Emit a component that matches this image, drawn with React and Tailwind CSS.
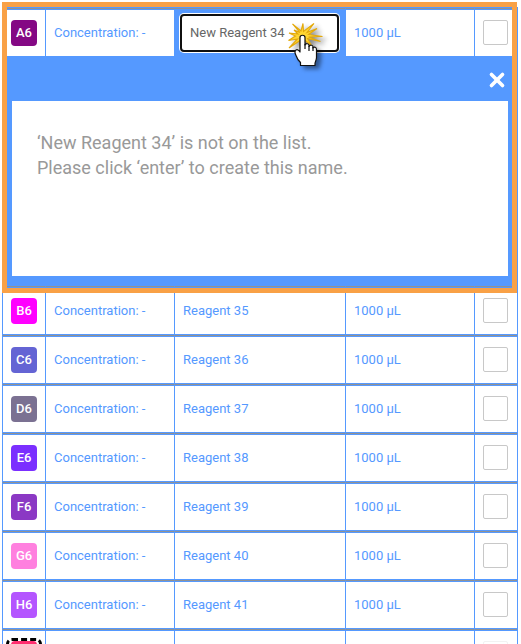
import { X } from "lucide-react"

const wells = [
  { id: "B6", reagent: "Reagent 35", color: "bg-[#ff00ff]" },
  { id: "C6", reagent: "Reagent 36", color: "bg-[#6464d4]" },
  { id: "D6", reagent: "Reagent 37", color: "bg-[#7b7192]" },
  { id: "E6", reagent: "Reagent 38", color: "bg-[#7b2fff]" },
  { id: "F6", reagent: "Reagent 39", color: "bg-[#8b38c4]" },
  { id: "G6", reagent: "Reagent 40", color: "bg-[#ff80df]" },
  { id: "H6", reagent: "Reagent 41", color: "bg-[#b455ff]" },
]

const cell =
  "h-[49px] border-t border-l border-t-[#929292] border-l-[#5599ff] p-0 pl-2 text-left font-normal shadow-[inset_0_1px_#5599ff,inset_0_-1px_#5599ff]"

function Badge({ id, color }) {
  return (
    <span
      className={`flex h-[26px] w-[26px] items-center justify-center rounded text-[13px] font-medium text-white ${color}`}
    >
      {id}
    </span>
  )
}

function Check({ label, faded }) {
  return (
    <input
      type="checkbox"
      aria-label={label}
      className={`mb-px block h-[25px] w-[25px] appearance-none rounded-xs border bg-white checked:bg-[#5599ff] ${
        faded ? "border-[#f2f2f2]" : "border-[#c8c8c8]"
      }`}
    />
  )
}

function ClickPointer() {
  return (
    <svg
      aria-hidden="true"
      viewBox="0 0 44 52"
      className="pointer-events-none absolute top-[11px] right-[13px] h-[52px] w-11 drop-shadow-[4px_3px_2px_rgba(0,0,0,0.45)]"
    >
      {/* Spark */}
      <path
        d="M12 12.500 4.500 4l8.500 7 2-7.500.5 8L26 3.500l-7 9 10-4-8.500 6 14 2-14 .5 12 4.500-13-3 4 7-7-5.500-4 10-.5-9.500-11 7.500 8.500-9-9 1.500 7-4.500L1 13l9 1-4-4z"
        fill="#ffd633"
        stroke="#e3a90c"
        strokeWidth="1.1"
        strokeLinejoin="miter"
      />
      {/* Hand */}
      <path
        d="M12 17.500c0-3 5-3 5 0v7.500c1-2 4-1.500 4 .5v1c1-2 4-1.500 4 .5v1c1-1.500 3.500-1 3.500 1.500v8c0 3-1.500 4-1.500 6v2H12.500v-3c-2-2-3.500-4-4.500-7-1-2-1.500-4.500 0-5.500 1.500-.8 3 .5 4 2z"
        fill="#fff"
        stroke="#111"
        strokeWidth="1.2"
        strokeLinejoin="round"
      />
      <path d="M17 24v5M21 26v5M25 27v4" stroke="#111" strokeWidth="1.2" />
    </svg>
  )
}

export default function App() {
  return (
    <main className="relative h-screen overflow-hidden bg-white pt-[7px] pr-[3px] pl-0.5 font-['Roboto',sans-serif] text-[13px] text-[#5599ff]">
      <table className="w-full table-fixed border-separate border-spacing-0 border-t border-r border-[#5599ff]">
        <colgroup>
          <col className="w-[43px]" />
          <col className="w-[129px]" />
          <col />
          <col className="w-[129px]" />
          <col className="w-[43px]" />
        </colgroup>
        <tbody>
          {/* Row being edited */}
          <tr>
            <th scope="row" className={cell}>
              <Badge id="A6" color="bg-[#840884]" />
            </th>
            <td className={cell}>Concentration: -</td>
            <td className="relative border-t border-t-[#929292] bg-[#5599ff] p-0 px-1.5">
              <input
                type="text"
                aria-label="Reagent name"
                defaultValue="New Reagent 34"
                className="block h-[38px] w-full rounded border-2 border-[#101010] bg-white pb-0.5 pl-2 text-[#666666] ring-1 ring-white outline-none"
              />
              <ClickPointer />
            </td>
            <td className={cell}>1000 µL</td>
            <td className={cell}>
              <Check label="Select A6" />
            </td>
          </tr>
          <tr>
            <td colSpan={5} className="bg-[#5599ff] p-0 pr-[9px] pb-2.5 pl-2.5">
              <div className="flex h-11 items-center justify-end pt-0.5">
                <button type="button" aria-label="Close" className="text-white">
                  <X size={22} strokeWidth={4} />
                </button>
              </div>
              <div className="min-h-[175px] bg-white px-[25px] pt-[29px] text-lg leading-[25px] text-[#999999]">
                <p>‘New Reagent 34’ is not on the list.</p>
                <p>Please click ‘enter’ to create this name.</p>
              </div>
            </td>
          </tr>

          {wells.map((well) => (
            <tr key={well.id}>
              <th scope="row" className={cell}>
                <Badge id={well.id} color={well.color} />
              </th>
              <td className={cell}>Concentration: -</td>
              <td className={cell}>{well.reagent}</td>
              <td className={cell}>1000 µL</td>
              <td className={cell}>
                <Check label={`Select ${well.id}`} />
              </td>
            </tr>
          ))}

          {/* Active well */}
          <tr>
            <th scope="row" className={cell}>
              <span className="-ml-[5px] flex h-8 w-9 items-center justify-center rounded-md border-3 border-dashed border-black">
                <span className="h-[26px] w-[26px] shrink-0 rounded bg-[#ff2d6f]" />
              </span>
            </th>
            <td className={cell} />
            <td className={cell} />
            <td className={cell} />
            <td className={cell}>
              <Check label="Select next well" faded />
            </td>
          </tr>
        </tbody>
      </table>

      {/* Highlight frame */}
      <div className="pointer-events-none absolute top-0.5 right-1 left-0.5 h-[291px] border-5 border-[#f9a146]" />
    </main>
  )
}
